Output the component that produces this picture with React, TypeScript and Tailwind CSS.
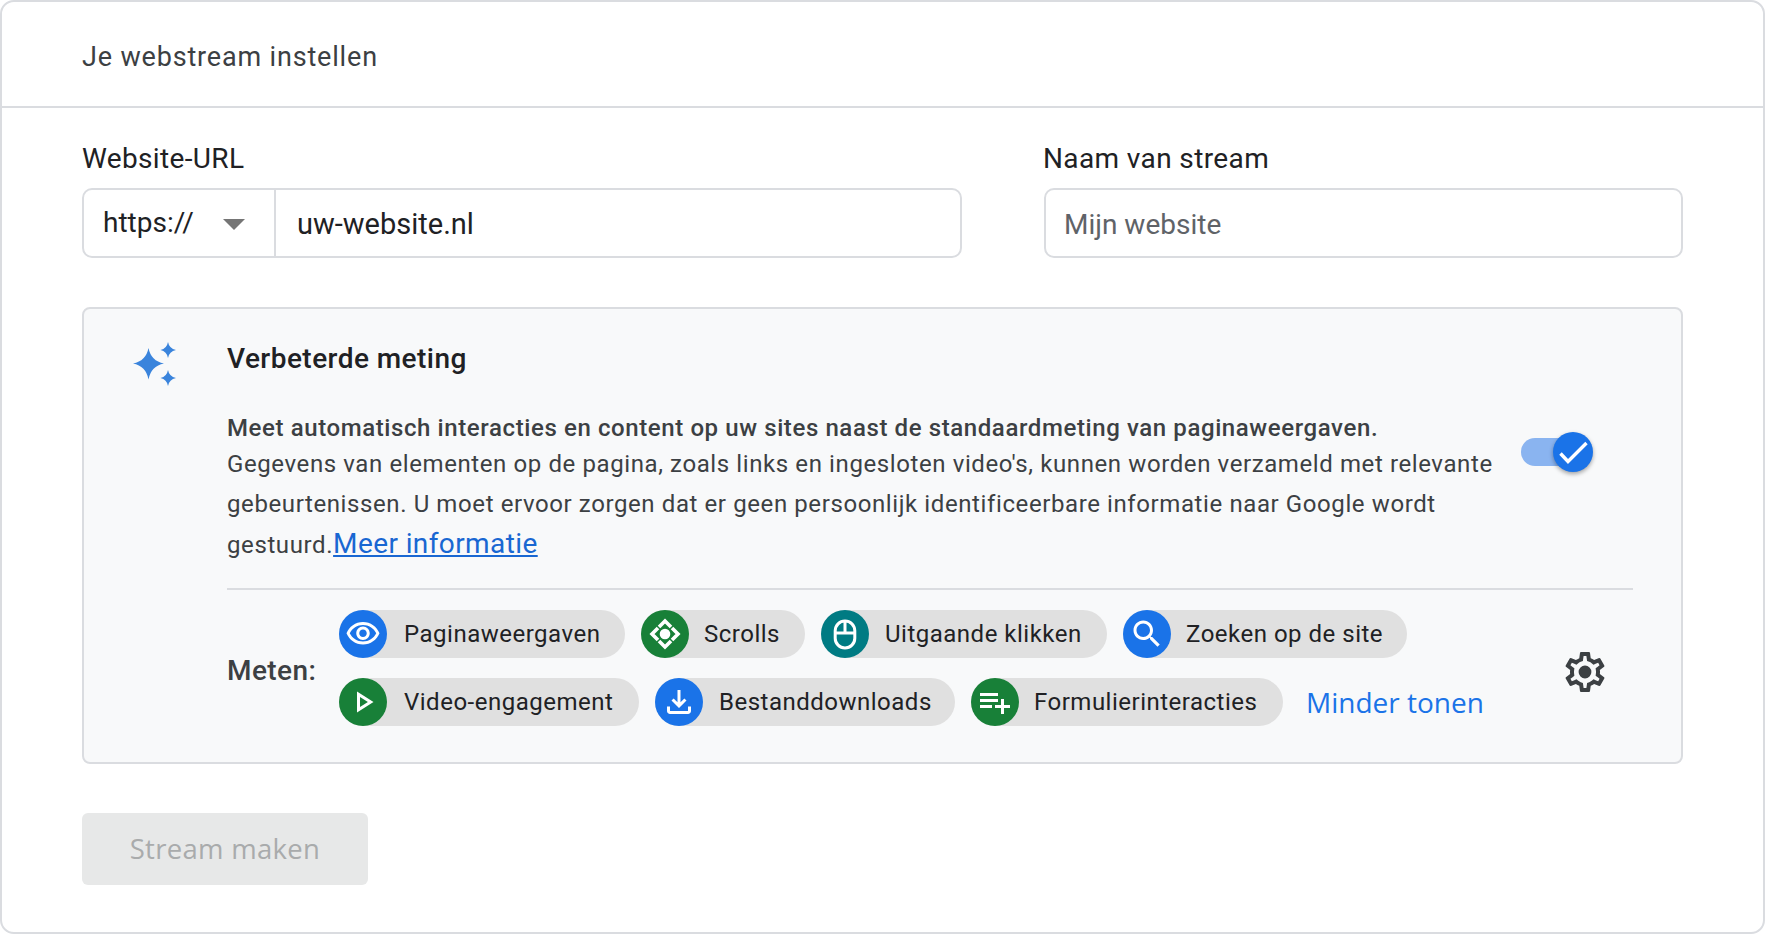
import React from 'react';

const iconPaths = {
  eye: 'M12 6c3.79 0 7.17 2.13 8.82 5.5C19.17 14.87 15.79 17 12 17s-7.17-2.13-8.82-5.5C4.83 8.13 8.21 6 12 6m0-2C7 4 2.73 7.11 1 11.5 2.73 15.89 7 19 12 19s9.27-3.11 11-7.5C21.27 7.11 17 4 12 4zm0 5c1.38 0 2.5 1.12 2.5 2.5S13.38 14 12 14s-2.5-1.12-2.5-2.5S10.62 9 12 9m0-2c-2.48 0-4.5 2.02-4.5 4.5S9.52 16 12 16s4.5-2.02 4.5-4.5S14.48 7 12 7z',
  search: 'M15.5 14h-.79l-.28-.27C15.41 12.59 16 11.11 16 9.5 16 5.91 13.09 3 9.5 3S3 5.91 3 9.5 5.91 16 9.5 16c1.61 0 3.09-.59 4.23-1.57l.27.28v.79l5 4.99L20.49 19l-4.99-5zm-6 0C7.01 14 5 11.99 5 9.5S7.01 5 9.5 5 14 7.01 14 9.5 11.99 14 9.5 14z',
  play: 'M10 8.64L15.27 12 10 15.36V8.64M8 5v14l11-7L8 5z',
  download: 'M18 15v3H6v-3H4v3c0 1.1.9 2 2 2h12c1.1 0 2-.9 2-2v-3h-2zm-1-4l-1.41-1.41L13 12.17V4h-2v8.17L8.41 9.59 7 11l5 5 5-5z',
  form: 'M14 10H2v2h12v-2zm0-4H2v2h12V6zm4 8v-4h-2v4h-4v2h4v4h2v-4h4v-2h-4zM2 16h8v-2H2v2z',
};

const Glyph = ({ d }: { d: string }) => (
  <svg viewBox="0 0 24 24" className="w-[36px] h-[36px]" fill="white">
    <path d={d} />
  </svg>
);

const ScrollIcon = () => (
  <svg viewBox="0 0 48 48" className="w-[48px] h-[48px]" fill="none" stroke="white" strokeWidth="3.6">
    <path d="M18 17l6-6 6 6M31 18l6 6-6 6M30 31l-6 6-6-6M17 30l-6-6 6-6" />
    <circle cx="24" cy="24" r="5.3" fill="white" stroke="none" />
  </svg>
);

const MouseIcon = () => (
  <svg viewBox="0 0 48 48" className="w-[48px] h-[48px]" fill="none" stroke="white" strokeWidth="3">
    <rect x="14.2" y="11" width="19.6" height="27" rx="9.8" />
    <path d="M24 11v11.5M14.2 23h19.6" />
  </svg>
);

const Chip = ({ label, color, width, gap = 'ml-[17px]', children }: { label: string; color: string; width: string; gap?: string; children: React.ReactNode }) => (
  <div className={`flex items-center h-[48px] rounded-full bg-[#e0e0e0] ${width}`}>
    <div className={`flex items-center justify-center w-[48px] h-[48px] rounded-full ${color}`}>{children}</div>
    <span className={`text-[24px] tracking-[0.5px] whitespace-nowrap text-[#202124] ${gap}`}>{label}</span>
  </div>
);

export default function App() {
  return (
    <div className="w-[1766px] h-[935px] bg-white font-['Roboto',sans-serif] overflow-hidden">
      <div className="w-[1765px] h-[934px] border-2 border-[#dadce0] rounded-[14px]">
        <div className="h-[106px] border-b-2 border-[#dadce0] pl-[80px] pt-[36px] text-[27px] leading-[38px] tracking-[0.83px] text-[#3c4043]">
          Je webstream instellen
        </div>

        <div className="pl-[80px] pr-[60px]">
          <div className="flex mt-[32px] gap-[82px]">
            <div className="w-[880px]">
              <div className="text-[28px] leading-[38px] tracking-[0.35px] text-[#202124]">Website-URL</div>
              <div className="flex h-[70px] mt-[10px] border-2 border-[#dadce0] rounded-[10px]">
                <div className="flex items-center w-[192px] border-r-2 border-[#dadce0] pl-[19px]">
                  <span className="text-[28px] text-[#202124] -mt-[1px]">https://</span>
                  <span className="ml-[29px] mt-[3px] w-0 h-0 border-l-[11px] border-r-[11px] border-t-[11px] border-l-transparent border-r-transparent border-t-[#757575]" />
                </div>
                <div className="flex items-center pl-[21px] pt-[4px] text-[29px] text-[#202124]">uw-website.nl</div>
              </div>
            </div>
            <div className="w-[639px]">
              <div className="-ml-px text-[28px] leading-[38px] tracking-[0.38px] text-[#202124]">Naam van stream</div>
              <div className="flex items-center h-[70px] mt-[10px] border-2 border-[#dadce0] rounded-[10px] pl-[18px] pt-[4px] text-[28px] text-[#5f6368]">
                Mijn website
              </div>
            </div>
          </div>

          <div className="flex h-[457px] w-[1601px] mt-[49px] border-2 border-[#dadce0] rounded-[8px] bg-[#f8f9fa]">
            <svg viewBox="0 0 44 44" className="w-[44px] h-[44px] ml-[49px] mt-[33px] shrink-0" fill="#3a84dc">
              <path d="M15.5 6 Q18 19 31 21.5 Q18 24 15.5 37.5 Q13 24 0 21.5 Q13 19 15.5 6Z" />
              <path d="M35 0 Q36.2 6.6 43 8 Q36.2 9.4 35 16 Q33.8 9.4 27.5 8 Q33.8 6.6 35 0Z" />
              <path d="M35 28 Q36.2 34.6 43 36 Q36.2 37.4 35 44 Q33.8 37.4 27.5 36 Q33.8 34.6 35 28Z" />
            </svg>
            <div className="ml-[50px] w-[1406px]">
              <div className="mt-[31px] text-[28px] leading-[38px] font-medium tracking-[0.45px] text-[#202124]">Verbeterde meting</div>
              <div className="flex mt-[33px]">
                <div className="w-[1290px] text-[24px] leading-[39.5px] tracking-[0.6px] text-[#3c4043]">
                  <div className="font-medium leading-[34px]">Meet automatisch interacties en content op uw sites naast de standaardmeting van paginaweergaven.</div>
                  <div>
                    Gegevens van elementen op de pagina, zoals links en ingesloten video's, kunnen worden verzameld met relevante gebeurtenissen. U moet ervoor zorgen dat er geen persoonlijk identificeerbare informatie naar Google wordt gestuurd.
                    <a className="text-[28px] tracking-[0.4px] text-[#1967d2] underline">Meer informatie</a>
                  </div>
                </div>
                <div className="relative mt-[21px] ml-[4px] w-[72px] h-[40px]">
                  <div className="absolute left-0 top-[6px] w-[60px] h-[28px] rounded-full bg-[#8ab4f0]" />
                  <div className="absolute left-[32px] top-0 w-[40px] h-[40px] rounded-full bg-[#1a73e8] shadow-[0_2px_4px_rgba(0,0,0,0.35)]">
                    <svg viewBox="0 0 40 40" className="w-[40px] h-[40px]" fill="none" stroke="white" strokeWidth="3.4">
                      <path d="M7.5 21.5l7.5 8 18.5-18.5" />
                    </svg>
                  </div>
                </div>
              </div>

              <div className="flex items-start mt-[22px] pt-[20px] border-t-2 border-[#dadce0]">
                <div className="w-[112px] mt-[42px] text-[28px] leading-[38px] tracking-[0.4px] font-medium text-[#3c4043]">Meten:</div>
                <div className="w-[1222px]">
                  <div className="flex gap-[16px]">
                    <Chip label="Paginaweergaven" color="bg-[#1a73e8]" width="w-[286px]"><Glyph d={iconPaths.eye} /></Chip>
                    <Chip label="Scrolls" color="bg-[#188038]" width="w-[164px]" gap="ml-[15px]"><ScrollIcon /></Chip>
                    <Chip label="Uitgaande klikken" color="bg-[#007b83]" width="w-[286px]" gap="ml-[16px]"><MouseIcon /></Chip>
                    <Chip label="Zoeken op de site" color="bg-[#1a73e8]" width="w-[284px]" gap="ml-[15px]"><Glyph d={iconPaths.search} /></Chip>
                  </div>
                  <div className="flex items-center gap-[16px] mt-[20px]">
                    <Chip label="Video-engagement" color="bg-[#188038]" width="w-[300px]"><Glyph d={iconPaths.play} /></Chip>
                    <Chip label="Bestanddownloads" color="bg-[#1a73e8]" width="w-[300px]" gap="ml-[16px]"><Glyph d={iconPaths.download} /></Chip>
                    <Chip label="Formulierinteracties" color="bg-[#188038]" width="w-[312px]" gap="ml-[15px]"><Glyph d={iconPaths.form} /></Chip>
                    <span className="ml-[7px] text-[28px] font-['Open_Sans',sans-serif] text-[#1a73e8]">Minder tonen</span>
                  </div>
                </div>
                <svg viewBox="0 0 24 24" className="w-[48px] h-[48px] mt-[38px] shrink-0" fill="#3c4043">
                  <path d="M19.43 12.98c.04-.32.07-.64.07-.98 0-.34-.03-.66-.07-.98l2.11-1.65c.19-.15.24-.42.12-.64l-2-3.46c-.09-.16-.26-.25-.44-.25-.06 0-.12.01-.17.03l-2.49 1c-.52-.4-1.08-.73-1.69-.98l-.38-2.65C14.46 2.18 14.25 2 14 2h-4c-.25 0-.46.18-.49.42l-.38 2.65c-.61.25-1.17.59-1.69.98l-2.49-1c-.06-.02-.12-.03-.18-.03-.17 0-.34.09-.43.25l-2 3.46c-.13.22-.07.49.12.64l2.11 1.65c-.04.32-.07.65-.07.98 0 .33.03.66.07.98l-2.11 1.65c-.19.15-.24.42-.12.64l2 3.46c.09.16.26.25.44.25.06 0 .12-.01.17-.03l2.49-1c.52.4 1.08.73 1.69.98l.38 2.65c.03.24.24.42.49.42h4c.25 0 .46-.18.49-.42l.38-2.65c.61-.25 1.17-.59 1.69-.98l2.49 1c.06.02.12.03.18.03.17 0 .34-.09.43-.25l2-3.46c.12-.22.07-.49-.12-.64l-2.11-1.65zm-1.98-1.71c.04.31.05.52.05.73 0 .21-.02.43-.05.73l-.14 1.13.89.7 1.08.84-.7 1.21-1.27-.51-1.04-.42-.9.68c-.43.32-.84.56-1.25.73l-1.06.43-.16 1.13-.2 1.35h-1.4l-.19-1.35-.16-1.13-1.06-.43c-.43-.18-.83-.41-1.23-.71l-.91-.7-1.06.43-1.27.51-.7-1.21 1.08-.84.89-.7-.14-1.13c-.03-.31-.05-.54-.05-.74s.02-.43.05-.73l.14-1.13-.89-.7-1.08-.84.7-1.21 1.27.51 1.04.42.9-.68c.43-.32.84-.56 1.25-.73l1.06-.43.16-1.13.2-1.35h1.39l.19 1.35.16 1.13 1.06.43c.43.18.83.41 1.23.71l.91.7 1.06-.43 1.27-.51.7 1.21-1.07.85-.89.7.14 1.13zM12 8.8a3.2 3.2 0 1 0 0 6.4 3.2 3.2 0 0 0 0-6.4z" />
                </svg>
              </div>
            </div>
          </div>

          <button className="block w-[286px] h-[72px] mt-[49px] rounded-[6px] bg-[#e7e8e8] text-[27.5px] tracking-[0.3px] font-['Open_Sans',sans-serif] text-[#a9abac]">
            Stream maken
          </button>
        </div>
      </div>
    </div>
  );
}
